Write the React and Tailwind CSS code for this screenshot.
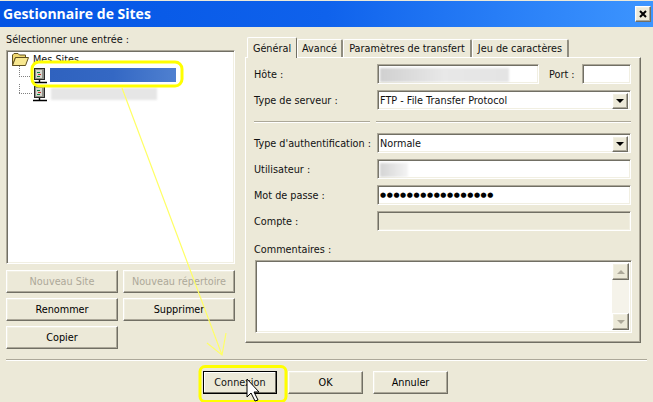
import React from 'react';

const sunken = "border border-t-[#aca899] border-l-[#aca899] border-r-white border-b-white shadow-[inset_1px_1px_0_#716f64,inset_-1px_-1px_0_#f1efe2]";
const raised = "border border-t-[#ffffff] border-l-[#ffffff] border-r-[#716f64] border-b-[#716f64] shadow-[inset_-1px_-1px_0_#aca899,inset_1px_1px_0_#f1efe2]";

const ServerIcon = ({ y = 8.5 }) => (
  <svg width="29" height="17" viewBox="0 0 29 17" className="shrink-0 overflow-visible">
    <path d={`M0.5 -2V${y}M0 ${y}H14`} stroke="#808080" strokeDasharray="1 1" fill="none" />
    <rect x="15.5" y="0.5" width="10" height="11" fill="#8f8f88" stroke="#282828" />
    <rect x="17" y="2" width="6" height="8" fill="#d8d8d0" />
    <rect x="18" y="4" width="3" height="1" fill="#108040" />
    <rect x="19" y="6" width="3" height="1" fill="#c03030" />
    <rect x="18" y="8" width="3" height="1" fill="#108040" />
    <path d="M20.5 12V15M14 14.5H28" stroke="#000" strokeWidth="1.4" fill="none" />
  </svg>
);

const FolderIcon = () => (
  <svg width="17" height="13" viewBox="0 0 17 13" className="shrink-0">
    <path d="M0.5 12.5V2L2 0.5H6L7.5 2H13.5V4.5H3.5L0.5 12.5Z" fill="#f0d870" stroke="#605020" />
    <path d="M0.5 12.5L3.5 4.5H16.5L13.5 12.5Z" fill="#f8e890" stroke="#605020" />
  </svg>
);

const Btn = ({ children, disabled, className = "" }) => (
  <div className={`h-[23px] flex items-center justify-center ${raised} ${disabled ? "text-[#aca899]" : "text-black"} ${className}`}>
    {children}
  </div>
);

const ComboArrow = () => (
  <div className={`absolute right-[2px] top-[2px] w-[16px] h-[16px] bg-[#ece9d8] flex items-center justify-center ${raised}`}>
    <div className="w-0 h-0 border-x-[4px] border-x-transparent border-t-[4px] border-t-black" />
  </div>
);

const Row = ({ label, children, className = "" }) => (
  <div className={`flex items-center h-[20px] ${className}`}>
    <div className="w-[123px] shrink-0 pt-px whitespace-nowrap">{label}</div>
    {children}
  </div>
);

const Field = ({ children, className = "" }) => (
  <div className={`relative h-[20px] flex items-center px-[2px] pt-px whitespace-nowrap ${sunken} ${className}`}>{children}</div>
);

const tabs = [
  { name: "Avancé", width: "w-[46px]" },
  { name: "Paramètres de transfert", width: "w-[129px]" },
  { name: "Jeu de caractères", width: "w-[97px]" },
];

export default function App() {
  return (
    <div className="relative w-[653px] h-[402px] overflow-hidden bg-[#ece9d8] text-[9.7px] leading-[13px] text-[#111] font-['DejaVu_Sans',sans-serif]">
      {/* Title bar */}
      <div className="h-[26px] mt-px flex items-center justify-between pl-[3px] pr-[1px] bg-gradient-to-r from-[#0454e4] via-[#0f62ec] to-[#3d95ff]">
        <span className="text-white text-[14px] font-bold font-['Open_Sans',sans-serif] -mt-px">Gestionnaire de Sites</span>
        <div className={`w-[16px] h-[16px] mr-[1px] mt-[-1px] bg-[#ece9d8] flex items-center justify-center ${raised}`}>
          <svg width="8" height="8" viewBox="0 0 8 8"><path d="M1 1L7 7M7 1L1 7" stroke="#000" strokeWidth="2" /></svg>
        </div>
      </div>

      <div className="flex pl-[6px] pt-[6px] h-[332px]">
        {/* Left column */}
        <div className="w-[229px] shrink-0">
          <div className="h-[17px]">Sélectionner une entrée :</div>
          <div className={`h-[214px] bg-white pl-[5px] pt-[2px] ${sunken}`}>
            <div className="flex items-center gap-[4px] h-[13px]">
              <FolderIcon />
              <span>Mes Sites</span>
            </div>
            <div className="ml-[7px] mt-[2px] flex items-center gap-[2px] h-[17px]">
              <ServerIcon />
              <div className="w-[126px] h-[14px] mb-[3px] bg-gradient-to-r from-[#2f62bf] via-[#3468c4] to-[#4f80d0] blur-[0.5px]" />
            </div>
            <div className="ml-[7px] mt-px flex items-center gap-[3px] h-[17px]">
              <ServerIcon y={7.5} />
              <div className="w-[106px] h-[12px] mb-[2px] bg-[#e6e6e6] blur-[1px]" />
            </div>
          </div>
          <div className="grid grid-cols-[112px_112px] gap-x-[5px] gap-y-[5px] mt-[6px]">
            <Btn disabled>Nouveau Site</Btn>
            <Btn disabled>Nouveau répertoire</Btn>
            <Btn>Renommer</Btn>
            <Btn>Supprimer</Btn>
            <Btn>Copier</Btn>
          </div>
        </div>

        {/* Right column */}
        <div className="ml-[10px] w-[396px] pt-[4px]">
          <div className="flex items-end h-[20px] pl-[2px]">
            <div className="relative z-10 w-[50px] h-[21px] -mb-px flex items-center justify-center bg-[#ece9d8] border border-b-0 border-t-white border-l-white border-r-[#716f64] rounded-t-[2px]">
              Général
            </div>
            {tabs.map((t) => (
              <div key={t.name} className={`h-[18px] ${t.width} flex items-center justify-center border-t border-t-white border-l border-l-white border-r-2 border-r-[#908d80] rounded-t-[2px] whitespace-nowrap`}>
                {t.name}
              </div>
            ))}
          </div>
          <div className="h-[286px] px-[8px] pt-[6px] border border-t-white border-l-white border-r-[#716f64] border-b-[#716f64] shadow-[inset_-1px_-1px_0_#aca899]">
            <Row label="Hôte :">
              <Field className="w-[162px] bg-white"><div className="w-[129px] h-[14px] bg-gradient-to-r from-[#d0d0d0] via-[#e8e8e8] to-[#e4e4e4] blur-[1px]" /></Field>
              <span className="ml-[10px] w-[33px] shrink-0 pt-px">Port :</span>
              <Field className="w-[49px] bg-white" />
            </Row>
            <Row label="Type de serveur :" className="mt-[6px]">
              <Field className="w-[254px] bg-white">FTP - File Transfer Protocol<ComboArrow /></Field>
            </Row>
            <div className="flex gap-[6px] mt-[11px] h-[2px]">
              <div className="w-[116px] border-t border-t-[#aca899] border-b border-b-white" />
              <div className="w-[255px] border-t border-t-[#aca899] border-b border-b-white" />
            </div>
            <Row label="Type d'authentification :" className="mt-[10px]">
              <Field className="w-[254px] bg-white">Normale<ComboArrow /></Field>
            </Row>
            <Row label="Utilisateur :" className="mt-[6px]">
              <Field className="w-[254px] bg-white"><div className="w-[28px] h-[14px] bg-gradient-to-r from-[#d4d4d4] to-[#f4f4f4] blur-[1px]" /></Field>
            </Row>
            <Row label="Mot de passe :" className="mt-[6px]">
              <Field className="w-[254px] bg-white">
                <span className="text-[7px] tracking-[0.6px] text-black">●●●●●●●●●●●●●●●●●</span>
              </Field>
            </Row>
            <Row label="Compte :" className="mt-[6px]">
              <Field className="w-[254px]" />
            </Row>
            <div className="mt-[12px] h-[17px]">Commentaires :</div>
            <div className={`relative ml-px w-[377px] h-[73px] bg-white ${sunken}`}>
              <div className="absolute right-[2px] top-[2px] bottom-[2px] w-[17px] flex flex-col bg-[#f5f3ea]">
                <div className={`h-[17px] bg-[#ece9d8] flex items-center justify-center ${raised}`}>
                  <div className="w-0 h-0 border-x-[4px] border-x-transparent border-b-[4px] border-b-[#aca899]" />
                </div>
                <div className="flex-1" />
                <div className={`h-[17px] bg-[#ece9d8] flex items-center justify-center ${raised}`}>
                  <div className="w-0 h-0 border-x-[4px] border-x-transparent border-t-[4px] border-t-[#aca899]" />
                </div>
              </div>
            </div>
          </div>
        </div>
      </div>

      {/* Bottom */}
      <div className="ml-[6px] mr-[6px] border-t border-t-[#aca899] border-b border-b-white h-[2px]" />
      <div className="flex pl-[203px] mt-[10px]">
        <div className="w-[74px] h-[23px] flex items-center justify-center bg-[#ece9d8] border border-black shadow-[inset_-1px_-1px_0_#716f64,inset_1px_1px_0_#fff]">Connexion</div>
        <Btn className="w-[75px] ml-[11px]">OK</Btn>
        <Btn className="w-[75px] ml-[10px]">Annuler</Btn>
      </div>

      {/* Annotations drawn over the window */}
      <svg className="absolute inset-0 pointer-events-none" width="653" height="402" viewBox="0 0 653 402">
        <rect x="32" y="62" width="150" height="24" rx="7" fill="none" stroke="#ffff00" strokeWidth="3" />
        <path d="M122 88L222 355M207 343L222 355L226 333" fill="none" stroke="#ffff66" strokeWidth="1.2" />
        <rect x="200" y="366.5" width="86" height="35" rx="5" fill="none" stroke="#ffff00" strokeWidth="3" />
        <path d="M247 379V397L251 393L255 401L258 400L254 392H259Z" fill="#fff" stroke="#000" strokeWidth="1" />
      </svg>
    </div>
  );
}
